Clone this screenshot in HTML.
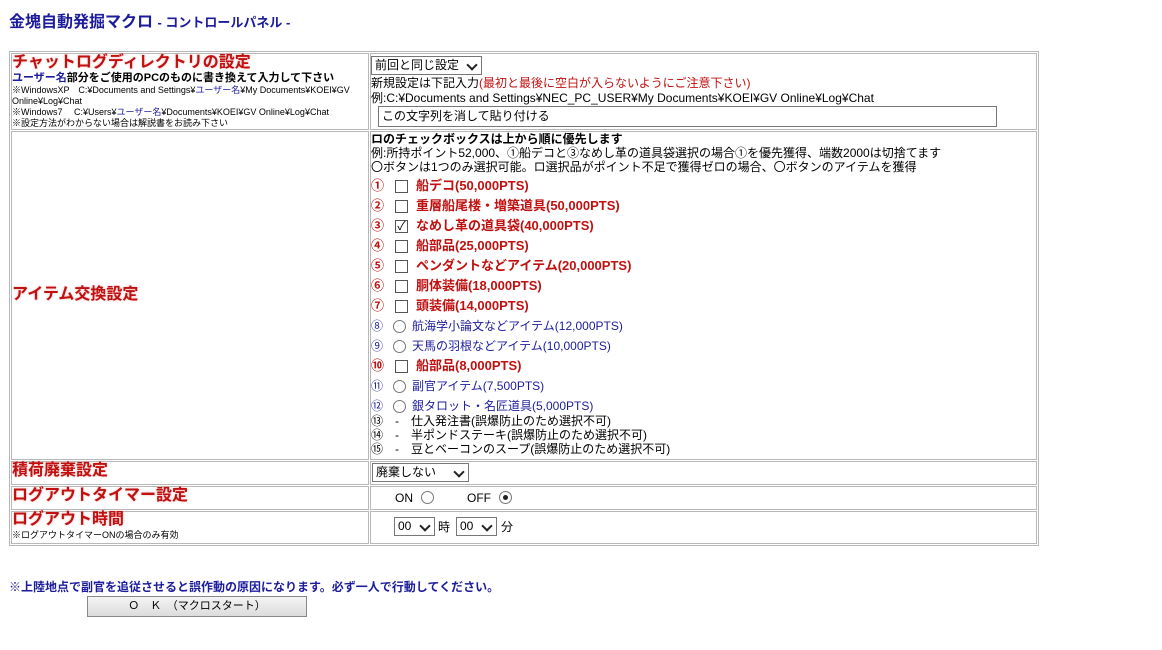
<!DOCTYPE html>
<html><head><meta charset="utf-8"><style>
*{margin:0;padding:0;box-sizing:border-box}
body{width:1162px;height:650px;background:#fff;font-family:"Liberation Sans","Noto Sans CJK JP",sans-serif;color:#000;position:relative;overflow:hidden}
.a{position:absolute;white-space:nowrap}
.cell{position:absolute;border:1px solid #b8b8b8}
.h{color:#c01010;font-weight:bold;font-size:16px;line-height:18px;text-shadow:0 0 2px #f3b0b0}
.t12{font-size:12px;line-height:14px}
.t9{font-size:9px;line-height:11px}
.blue{color:#1c1c9c}
.red{color:#c01010}
.sel{position:absolute;border:1px solid #777;background:#fff;font-size:12px;height:19px;line-height:17px;padding-left:3px}
.sel:after{content:"";position:absolute;right:5px;top:4px;width:6px;height:6px;border-right:2px solid #222;border-bottom:2px solid #222;transform:rotate(45deg)}
.cb{position:absolute;width:13px;height:13px;border:1px solid #555;background:#fff}
.rb{position:absolute;width:13px;height:13px;border:1px solid #777;border-radius:50%;background:#fff}
.item{position:absolute;left:371px;height:16px;font-size:12px;line-height:16px;white-space:nowrap}
.bi{color:#c01010;font-weight:bold;font-size:13px;line-height:16px}
</style></head><body>
<div class="a" style="left:9px;top:13px;font-size:16px;line-height:20px;font-weight:bold;color:#1c1c9c">金塊自動発掘マクロ <span style="font-size:13px">- コントロールパネル -</span></div>

<div class="cell" style="left:9px;top:51px;width:1030px;height:495px;"></div>
<div class="cell" style="left:11px;top:53px;width:358px;height:77px"></div>
<div class="cell" style="left:370px;top:53px;width:667px;height:77px"></div>
<div class="cell" style="left:11px;top:131px;width:358px;height:329px"></div>
<div class="cell" style="left:370px;top:131px;width:667px;height:329px"></div>
<div class="cell" style="left:11px;top:461px;width:358px;height:24px"></div>
<div class="cell" style="left:370px;top:461px;width:667px;height:24px"></div>
<div class="cell" style="left:11px;top:486px;width:358px;height:24px"></div>
<div class="cell" style="left:370px;top:486px;width:667px;height:24px"></div>
<div class="cell" style="left:11px;top:511px;width:358px;height:33px"></div>
<div class="cell" style="left:370px;top:511px;width:667px;height:33px"></div>

<div class="a h" style="left:12px;top:54px">チャットログディレクトリの設定</div>
<div class="a" style="left:12px;top:72px;font-size:11px;line-height:13px;font-weight:bold"><span class="blue">ユーザー名</span>部分をご使用のPCのものに書き換えて入力して下さい</div>
<div class="a t9" style="left:12px;top:85px">※WindowsXP　C:¥Documents and Settings¥<span class="blue">ユーザー名</span>¥My Documents¥KOEI¥GV</div>
<div class="a t9" style="left:12px;top:96px">Online¥Log¥Chat</div>
<div class="a t9" style="left:12px;top:107px">※Windows7　 C:¥Users¥<span class="blue">ユーザー名</span>¥Documents¥KOEI¥GV Online¥Log¥Chat</div>
<div class="a t9" style="left:12px;top:118px">※設定方法がわからない場合は解説書をお読み下さい</div>

<div class="sel" style="left:371px;top:56px;width:111px">前回と同じ設定</div>
<div class="a t12" style="left:371px;top:76px">新規設定は下記入力<span class="red">(最初と最後に空白が入らないようにご注意下さい)</span></div>
<div class="a t12" style="left:371px;top:91px">例:C:¥Documents and Settings¥NEC_PC_USER¥My Documents¥KOEI¥GV Online¥Log¥Chat</div>
<div class="a" style="left:378px;top:106px;width:619px;height:21px;border:1px solid #777;font-size:12px;line-height:19px;padding-left:3px">この文字列を消して貼り付ける</div>

<div class="a h" style="left:12px;top:286px">アイテム交換設定</div>
<div class="a" style="left:371px;top:132px;font-size:12px;line-height:14px;font-weight:bold">ロのチェックボックスは上から順に優先します</div>
<div class="a t12" style="left:371px;top:146px">例:所持ポイント52,000、①船デコと③なめし革の道具袋選択の場合①を優先獲得、端数2000は切捨てます</div>
<div class="a t12" style="left:371px;top:160px">〇ボタンは1つのみ選択可能。ロ選択品がポイント不足で獲得ゼロの場合、〇ボタンのアイテムを獲得</div>

<div class="item" style="top:178px"><span class="bi">①</span></div><div class="cb" style="left:395px;top:180px"></div><div class="a bi" style="left:416px;top:178px">船デコ(50,000PTS)</div>
<div class="item" style="top:198px"><span class="bi">②</span></div><div class="cb" style="left:395px;top:200px"></div><div class="a bi" style="left:416px;top:198px">重層船尾楼・増築道具(50,000PTS)</div>
<div class="item" style="top:218px"><span class="bi">③</span></div><div class="cb" style="left:395px;top:220px;font-size:12px;line-height:11px;text-align:center">✓</div><div class="a bi" style="left:416px;top:218px">なめし革の道具袋(40,000PTS)</div>
<div class="item" style="top:238px"><span class="bi">④</span></div><div class="cb" style="left:395px;top:240px"></div><div class="a bi" style="left:416px;top:238px">船部品(25,000PTS)</div>
<div class="item" style="top:258px"><span class="bi">⑤</span></div><div class="cb" style="left:395px;top:260px"></div><div class="a bi" style="left:416px;top:258px">ペンダントなどアイテム(20,000PTS)</div>
<div class="item" style="top:278px"><span class="bi">⑥</span></div><div class="cb" style="left:395px;top:280px"></div><div class="a bi" style="left:416px;top:278px">胴体装備(18,000PTS)</div>
<div class="item" style="top:298px"><span class="bi">⑦</span></div><div class="cb" style="left:395px;top:300px"></div><div class="a bi" style="left:416px;top:298px">頭装備(14,000PTS)</div>
<div class="item blue" style="top:318px">⑧</div><div class="rb" style="left:393px;top:320px"></div><div class="a blue" style="left:412px;top:318px;font-size:12px;line-height:16px">航海学小論文などアイテム(12,000PTS)</div>
<div class="item blue" style="top:338px">⑨</div><div class="rb" style="left:393px;top:340px"></div><div class="a blue" style="left:412px;top:338px;font-size:12px;line-height:16px">天馬の羽根などアイテム(10,000PTS)</div>
<div class="item" style="top:358px"><span class="bi">⑩</span></div><div class="cb" style="left:395px;top:360px"></div><div class="a bi" style="left:416px;top:358px">船部品(8,000PTS)</div>
<div class="item blue" style="top:378px">⑪</div><div class="rb" style="left:393px;top:380px"></div><div class="a blue" style="left:412px;top:378px;font-size:12px;line-height:16px">副官アイテム(7,500PTS)</div>
<div class="item blue" style="top:398px">⑫</div><div class="rb" style="left:393px;top:400px"></div><div class="a blue" style="left:412px;top:398px;font-size:12px;line-height:16px">銀タロット・名匠道具(5,000PTS)</div>
<div class="a t12" style="left:371px;top:414px">⑬　-　仕入発注書(誤爆防止のため選択不可)</div>
<div class="a t12" style="left:371px;top:428px">⑭　-　半ポンドステーキ(誤爆防止のため選択不可)</div>
<div class="a t12" style="left:371px;top:442px">⑮　-　豆とベーコンのスープ(誤爆防止のため選択不可)</div>

<div class="a h" style="left:12px;top:462px">積荷廃棄設定</div>
<div class="sel" style="left:372px;top:463px;width:97px">廃棄しない</div>

<div class="a h" style="left:12px;top:487px">ログアウトタイマー設定</div>
<div class="a t12" style="left:395px;top:491px">ON</div><div class="rb" style="left:421px;top:491px"></div>
<div class="a t12" style="left:467px;top:491px">OFF</div><div class="rb" style="left:499px;top:491px"><div style="position:absolute;left:3px;top:3px;width:5px;height:5px;border-radius:50%;background:#222"></div></div>

<div class="a h" style="left:12px;top:511px">ログアウト時間</div>
<div class="a" style="left:12px;top:530px;font-size:9px;line-height:11px">※ログアウトタイマーONの場合のみ有効</div>
<div class="sel" style="left:394px;top:517px;width:41px">00</div>
<div class="a t12" style="left:438px;top:520px">時</div>
<div class="sel" style="left:456px;top:517px;width:41px">00</div>
<div class="a t12" style="left:501px;top:520px">分</div>

<div class="a" style="left:9px;top:580px;font-size:12px;line-height:15px;font-weight:bold;color:#1c1c9c">※上陸地点で副官を追従させると誤作動の原因になります。必ず一人で行動してください。</div>
<div class="a" style="left:87px;top:596px;width:220px;height:21px;border:1px solid #888;background:linear-gradient(#f4f4f4,#dcdcdc);font-size:11px;line-height:19px;text-align:center">Ｏ　Ｋ　（マクロスタート）</div>
</body></html>
